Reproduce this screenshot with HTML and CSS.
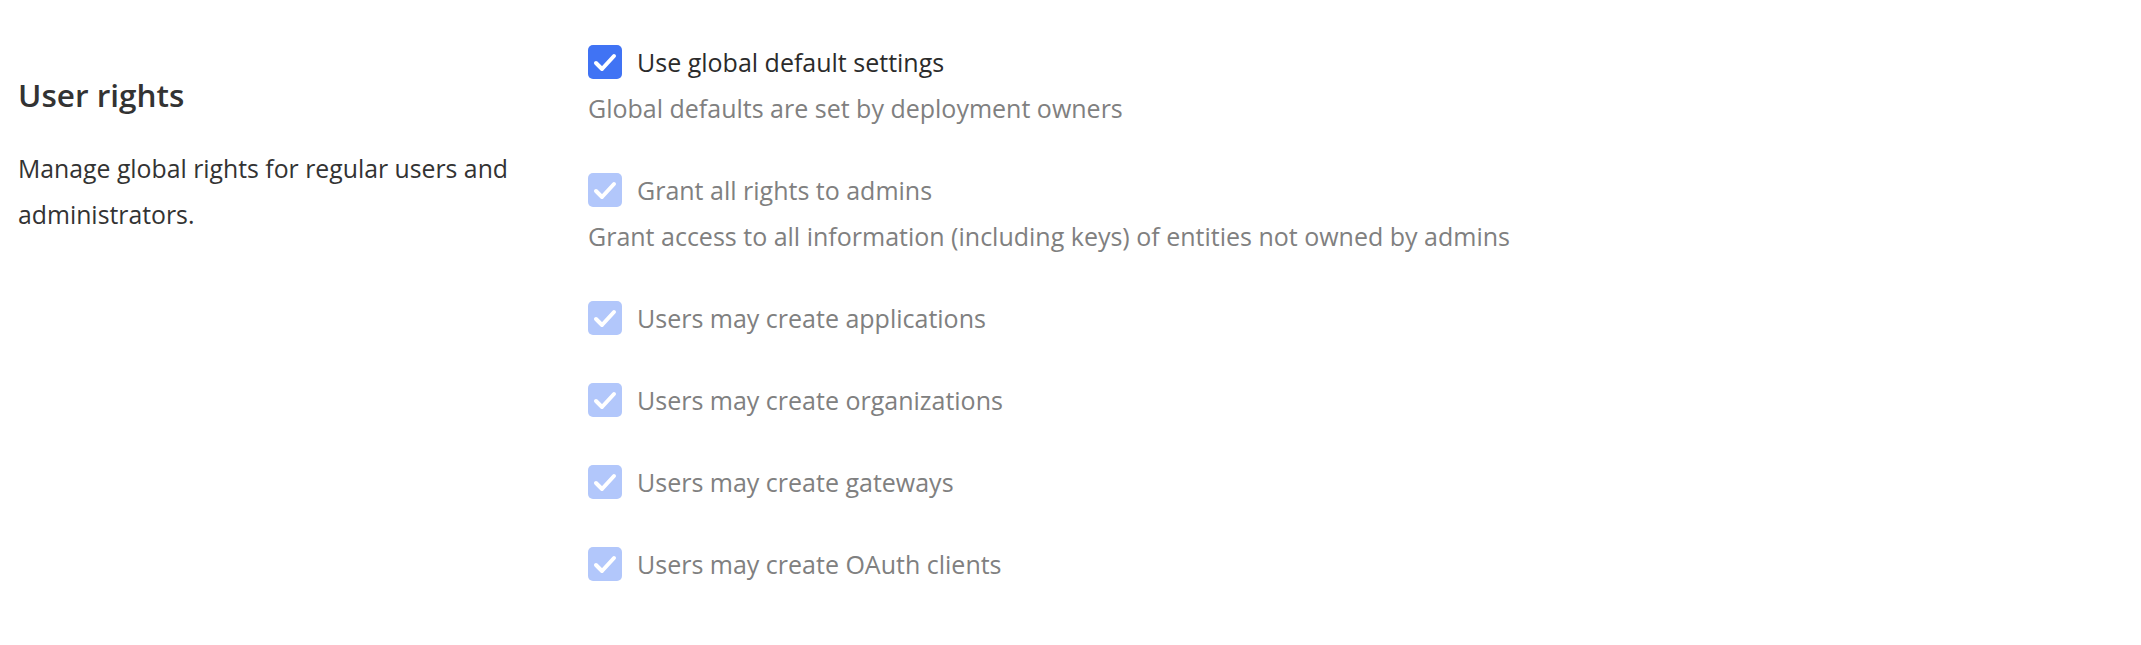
FILE: index.html
```html
<!DOCTYPE html>
<html lang="en">
<head>
<meta charset="utf-8">
<title>User rights</title>
<link rel="stylesheet" href="styles.css">
</head>
<body>
<div class="page">
  <section class="intro">
    <h2 class="title">User rights</h2>
    <p class="desc">Manage global rights for regular users and administrators.</p>
  </section>
  <section class="fields">
    <div class="field">
      <label class="check">
        <span class="box"><svg viewBox="0 0 34 34"><polyline points="8,18 14,24 26,11"/></svg></span>
        <span class="label">Use global default settings</span>
      </label>
      <p class="hint">Global defaults are set by deployment owners</p>
    </div>
    <div class="field disabled">
      <label class="check">
        <span class="box"><svg viewBox="0 0 34 34"><polyline points="8,18 14,24 26,11"/></svg></span>
        <span class="label">Grant all rights to admins</span>
      </label>
      <p class="hint">Grant access to all information (including keys) of entities not owned by admins</p>
    </div>
    <div class="field disabled">
      <label class="check">
        <span class="box"><svg viewBox="0 0 34 34"><polyline points="8,18 14,24 26,11"/></svg></span>
        <span class="label">Users may create applications</span>
      </label>
    </div>
    <div class="field disabled">
      <label class="check">
        <span class="box"><svg viewBox="0 0 34 34"><polyline points="8,18 14,24 26,11"/></svg></span>
        <span class="label">Users may create organizations</span>
      </label>
    </div>
    <div class="field disabled">
      <label class="check">
        <span class="box"><svg viewBox="0 0 34 34"><polyline points="8,18 14,24 26,11"/></svg></span>
        <span class="label">Users may create gateways</span>
      </label>
    </div>
    <div class="field disabled">
      <label class="check">
        <span class="box"><svg viewBox="0 0 34 34"><polyline points="8,18 14,24 26,11"/></svg></span>
        <span class="label">Users may create OAuth clients</span>
      </label>
    </div>
  </section>
</div>
</body>
</html>
```
FILE: styles.css
```css
html, body {
  margin: 0;
  padding: 0;
  background: #ffffff;
}

body {
  font-family: "Open Sans", "Noto Sans", "Liberation Sans", sans-serif;
  color: #333333;
}

.page {
  display: grid;
  grid-template-columns: 570px 1fr;
  padding-left: 18px;
  padding-right: 18px;
}

.intro {
  padding-top: 75px;
  padding-right: 30px;
}

.title {
  margin: 0;
  font-size: 31.5px;
  line-height: 40px;
  font-weight: 600;
  color: #333333;
}

.desc {
  margin: 30px 0 0 0;
  font-size: 24.8px;
  line-height: 46px;
  color: #333333;
}

.fields {
  display: flex;
  flex-direction: column;
  gap: 48px;
  padding-top: 45px;
}

.field {
  display: flex;
  flex-direction: column;
}

.check {
  display: flex;
  align-items: center;
  gap: 15px;
  height: 34px;
}

.box {
  width: 34px;
  height: 34px;
  border-radius: 5px;
  background: #4073f4;
  display: flex;
  align-items: center;
  justify-content: center;
  flex: none;
}

.box svg {
  width: 34px;
  height: 34px;
  fill: none;
  stroke: #ffffff;
  stroke-width: 4;
  stroke-linecap: round;
  stroke-linejoin: round;
}

.label {
  font-size: 25px;
  line-height: 34px;
  color: #2b2b2b;
}

.hint {
  margin: 12px 0 0 0;
  font-size: 25px;
  line-height: 34px;
  color: #808080;
}

.disabled .box {
  background: #b2c7fb;
}

.disabled .label {
  color: #808080;
}
```
